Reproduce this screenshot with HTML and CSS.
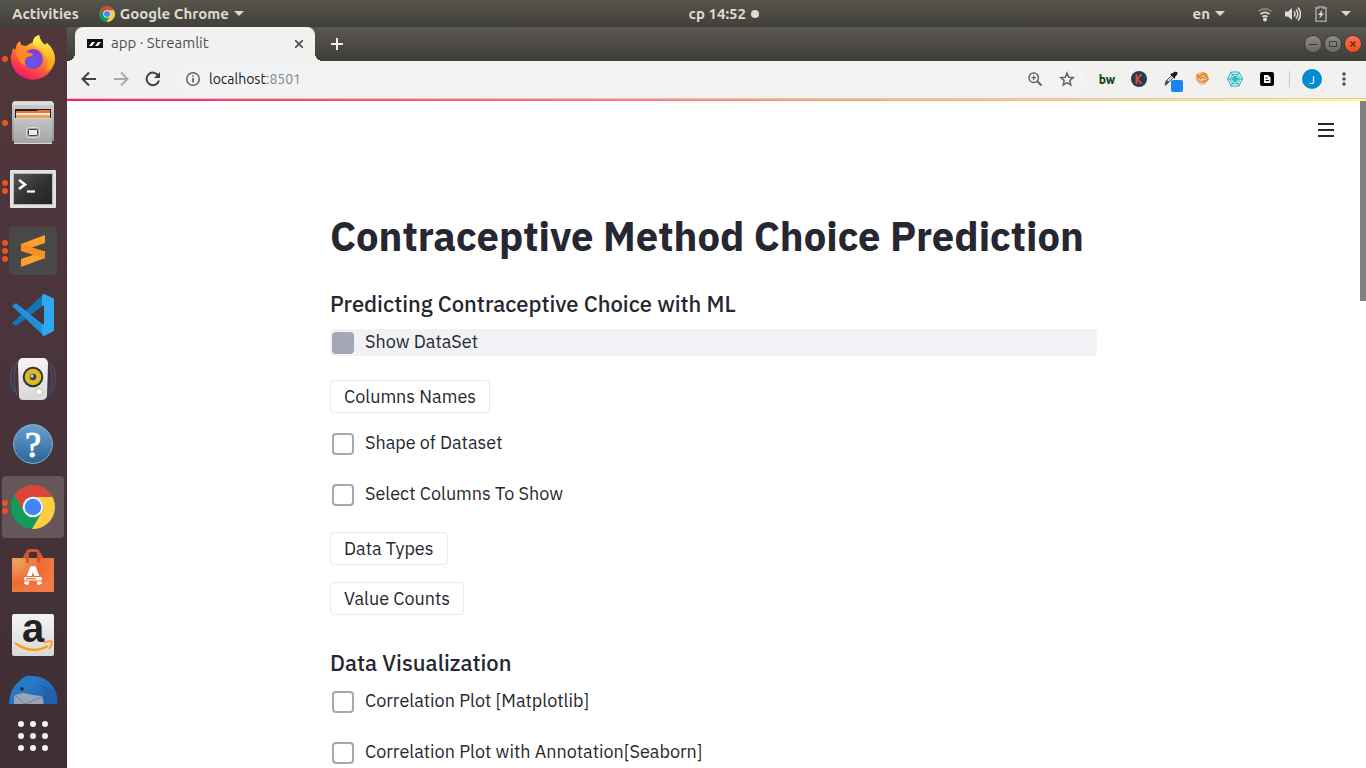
FILE: index.html
```html
<!DOCTYPE html>
<html lang="en">
<head>
<meta charset="utf-8">
<meta name="viewport" content="width=device-width, initial-scale=1">
<title>app · Streamlit</title>
<link rel="stylesheet" href="styles.css">
</head>
<body>
<svg class="defs" width="0" height="0" aria-hidden="true">
  <defs>
    <linearGradient id="ff" x1="0.8" y1="0" x2="0.3" y2="1"><stop offset="0" stop-color="#fff44f"/><stop offset=".35" stop-color="#ffa62b"/><stop offset=".7" stop-color="#ff4f3f"/><stop offset="1" stop-color="#f5156c"/></linearGradient>
    <linearGradient id="fy" x1="0.5" y1="0" x2="0.6" y2="1"><stop offset="0" stop-color="#fff44f"/><stop offset="1" stop-color="#ff980e"/></linearGradient>
    <radialGradient id="fp" cx=".45" cy=".7" r=".7"><stop offset="0" stop-color="#5b5bf0"/><stop offset="1" stop-color="#9038c8"/></radialGradient>
    <linearGradient id="metal" x1="0" y1="0" x2="0" y2="1"><stop offset="0" stop-color="#d2d2d2"/><stop offset="1" stop-color="#8e8e8e"/></linearGradient>
    <linearGradient id="front" x1="0" y1="0" x2="0" y2="1"><stop offset="0" stop-color="#c4c4c4"/><stop offset="1" stop-color="#a4a4a4"/></linearGradient>
    <linearGradient id="term" x1="0" y1="0" x2="1" y2="1"><stop offset="0" stop-color="#555"/><stop offset=".5" stop-color="#333"/><stop offset="1" stop-color="#222"/></linearGradient>
    <linearGradient id="help" x1="0" y1="0" x2="0" y2="1"><stop offset="0" stop-color="#6aa0d0"/><stop offset="1" stop-color="#2a6498"/></linearGradient>
    <radialGradient id="bag" cx=".1" cy=".1" r="1"><stop offset="0" stop-color="#f0a465"/><stop offset=".6" stop-color="#ec6c32"/><stop offset="1" stop-color="#f47b45"/></radialGradient>
    <linearGradient id="paper" x1="0" y1="0" x2="0" y2="1"><stop offset="0" stop-color="#f4f4f4"/><stop offset="1" stop-color="#d8d8d8"/></linearGradient>
    <linearGradient id="bird" x1="0" y1="0" x2="1" y2="1"><stop offset="0" stop-color="#2a8fe0"/><stop offset="1" stop-color="#1d4f9a"/></linearGradient>
    <symbol id="chrome" viewBox="0 0 44 44">
      <circle cx="22" cy="22" r="22" fill="#109d58"/>
      <path d="M3.500 10A22 22 0 0 1 41.500 12H22A10 10 0 0 0 13 27Z" fill="#db4437"/>
      <path d="M41.500 12A22 22 0 0 1 21 44L31 27A10 10 0 0 0 22 12Z" fill="#ffcd40"/>
      <circle cx="22" cy="22" r="10.300" fill="#f4f4f4"/><circle cx="22" cy="22" r="8.200" fill="#4285f4"/>
    </symbol>
  </defs>
</svg>

<header class="topbar">
  <nav class="topbar-left">
    <button class="sys" type="button">Activities</button>
    <button class="sys app-menu" type="button"><svg width="16" height="16"><use href="#chrome"/></svg><span>Google Chrome</span><i class="caret"></i></button>
  </nav>
  <button class="sys clock" type="button"><span>ср 14:52</span><i class="notice"></i></button>
  <div class="topbar-right">
    <button class="sys lang" type="button"><span>en</span><i class="caret"></i></button>
    <button class="sys status" type="button" aria-label="System status">
      <svg width="16" height="16" viewBox="0 0 16 16" fill="none" stroke="#dcdbd7" stroke-width="1.700"><path d="M1.500 5.400Q8 .4 14.500 5.400" stroke="#8b8983"/><path d="M3.500 8.200Q8 4.600 12.500 8.200M5.400 10.900Q8 8.900 10.600 10.900"/><circle cx="8" cy="13.500" r="2" fill="#dcdbd7" stroke="none"/></svg>
      <svg width="16" height="16" viewBox="0 0 16 16"><path d="M0 5.500h3L7 2v12L3 10.500H0Z" fill="#dcdbd7"/><path d="M9 5.500q2 2.500 0 5M11 3.500q3.600 4.500 0 9M13 1.500q5 6.500 0 13" stroke="#dcdbd7" stroke-width="1.500" fill="none"/></svg>
      <svg width="16" height="16" viewBox="0 0 16 16"><path d="M5.500 2V.8h5V2H13v13.300H3V2Z" fill="none" stroke="#9d9b96" stroke-width="1.800"/><path d="M9.500 3.500 5 9h2.500L6 13l5-5.500H8.500Z" fill="#dcdbd7"/></svg>
      <i class="caret"></i>
    </button>
  </div>
</header>

<div class="desktop">
  <aside class="dock" aria-label="Dock">
    <div class="dock-list">
      <button class="tile" type="button" aria-label="Firefox"><span class="dots"><i></i></span>
        <svg width="62" height="62"><path d="M10 25 11 20 13 22 15 16 18 13 19 17 24 18 31 14Q31 9 37 7Q38 13 43 17L45 15Q53 22 53 32A22.200 22.200 0 0 1 8.800 31Q8.500 27 10 25Z" fill="url(#ff)"/><path d="M31 14Q31 9 37 7Q38 13 43 17L45 15Q53 22 53 32 51 42 43 43 49 33 42 25 38 19 31 17Z" fill="url(#fy)"/><circle cx="31" cy="31" r="10" fill="url(#fp)"/><path d="M14 23Q21 20 25 24L31 26Q30 29 25 29 21 33 24 38 15 35 14 23Z" fill="#ff8a22"/></svg></button>
      <button class="tile" type="button" aria-label="Files"><span class="dots"><i></i></span>
        <svg width="62" height="62"><path d="M12 9H50L52 12V49H10V12Z" fill="url(#metal)"/><path d="M11 10H51L52 13H10Z" fill="#dedede"/><path d="M13 17H49V27H13Z" fill="#222"/><path d="M14 19H35L36 18H48V26H14Z" fill="#e07a30"/><path d="M14 21H48V23H14Z" fill="#f5e8d8"/><path d="M14 23H48V26H14Z" fill="#e9a45c"/><path d="M12 26H50V52H12Z" fill="url(#front)"/><path d="M12 26H50V27H12ZM12 51H50V52H12Z" fill="#d8d8d8"/><rect x="24.500" y="35.500" width="13" height="10" rx="2" fill="#a5a5a5" stroke="#dcdcdc"/><rect x="26.500" y="37.500" width="9" height="6" rx="1" fill="#eee" stroke="#444"/></svg></button>
      <button class="tile" type="button" aria-label="Terminal"><span class="dots"><i></i><i></i></span>
        <svg width="62" height="62"><rect x="8" y="14" width="46" height="38" rx="1" fill="#e1e1df"/><rect x="11" y="17" width="40" height="32" fill="#b8b8b6"/><rect x="12" y="18" width="38" height="30" fill="url(#term)"/><path d="m17 24 6 4.500-6 4.500" fill="none" stroke="#fff" stroke-width="2.600"/><path d="M25 35.500h8" stroke="#fff" stroke-width="2.200"/></svg></button>
      <button class="tile" type="button" aria-label="Sublime Text"><span class="dots"><i></i><i></i><i></i></span>
        <svg width="62" height="62"><rect x="7" y="7" width="48" height="48" rx="3" fill="#484848"/><path d="M19 24 43 15V23L19 31ZM43 38 19 47V39L43 31Z" fill="#ffa02a"/><path d="M19 24V31L43 38.500V31.500Z" fill="#f8911f"/></svg></button>
      <button class="tile" type="button" aria-label="Visual Studio Code">
        <svg width="62" height="62"><path d="m10 39 4 3L42 21V10Z" fill="#1474b8"/><path d="m10 22 4-3L42 41V52Z" fill="#2190d8"/><path d="m42 10 10 4.500V47L42 52l-2-1V11Z" fill="#2ea8f2"/><path d="M42 21V41L29 31Z" fill="#47343b"/></svg></button>
      <button class="tile" type="button" aria-label="Rhythmbox">
        <svg width="62" height="62"><path d="M12 16q-7 14 0 28M15 14q-6 16 0 33M50 16q7 14 0 28M47 14q6 16 0 33" fill="none" stroke="#42506b" stroke-width="1.400"/><path d="M20 10H42Q46 11 46 16L45 48Q44 52 40 52H21Q17 52 17 48L16 16Q16 11 20 10Z" fill="url(#paper)"/><circle cx="31" cy="29" r="10.300" fill="#333"/><circle cx="31" cy="29" r="8.300" fill="#d9bd22"/><circle cx="31" cy="29" r="3.300" fill="#444"/><circle cx="30" cy="28" r="1.500" fill="#ddd"/><circle cx="37" cy="44" r="3.300" fill="#fff" stroke="#bbb"/></svg></button>
      <button class="tile" type="button" aria-label="Help">
        <svg width="62" height="62"><circle cx="31" cy="32" r="19.400" fill="url(#help)" stroke="#85aed2"/><text x="31" y="45" class="help-mark">?</text></svg></button>
      <button class="tile active" type="button" aria-label="Google Chrome"><span class="dots"><i></i><i></i></span>
        <svg width="44" height="44"><use href="#chrome"/></svg></button>
      <button class="tile" type="button" aria-label="Ubuntu Software">
        <svg width="62" height="62"><path d="M10 18H52V52H10Z" fill="url(#bag)"/><path d="M25.500 23V13Q25.500 10.500 28.500 10.500H33.500Q36.500 10.500 36.500 13V23M22 18 25 13M40 18 37 13" fill="none" stroke="#d4562a" stroke-width="2.800"/><path d="M24 44.500 30 28.500H32L38 44.500" fill="none" stroke="#fff" stroke-width="4.500"/><rect x="21.500" y="36.500" width="19" height="4.500" rx="2" fill="#fff" stroke="#ec6f3a"/><path d="M24 38.800H34" stroke="#ec6f3a" stroke-width="1.300"/></svg></button>
      <button class="tile" type="button" aria-label="Amazon">
        <svg width="62" height="62"><rect x="10" y="10" width="42" height="42" rx="2" fill="url(#paper)"/><text x="31" y="38" class="amazon-mark">a</text><path d="M13 39Q30 51 46 42" fill="none" stroke="#ff9d0a" stroke-width="2.400"/><path d="M42 39Q48 36 50 38 50 41 47 45" fill="none" stroke="#ff9d0a" stroke-width="1.800"/></svg></button>
      <button class="tile" type="button" aria-label="Thunderbird">
        <svg width="62" height="62"><path d="M7 36Q8 18 20 12 23 7 29 8 47 8 54 24 57 32 54 44H8Z" fill="url(#bird)"/><path d="M12 40V28L18 24 31 27 40 28Q43 35 40 44Z" fill="#98a3b5"/><path d="m14 28 9 8 17-7" fill="none" stroke="#717e93"/><path d="M9 28Q14 12 25 8 34 12 36 17 28 17 26 21 20 27 14 26Z" fill="#2779c2"/><path d="M36 17Q46 22 43 36L53 37Q55 20 36 17Z" fill="#2260a8"/><circle cx="20" cy="21" r="1.800" fill="#1b2740"/></svg></button>
    </div>
    <button class="apps" type="button" aria-label="Show Applications">
      <svg width="32" height="32" fill="#f2f1f0"><circle cx="4" cy="4" r="3"/><circle cx="16" cy="4" r="3"/><circle cx="28" cy="4" r="3"/><circle cx="4" cy="16" r="3"/><circle cx="16" cy="16" r="3"/><circle cx="28" cy="16" r="3"/><circle cx="4" cy="28" r="3"/><circle cx="16" cy="28" r="3"/><circle cx="28" cy="28" r="3"/></svg>
    </button>
  </aside>

  <section class="browser">
    <div class="tabstrip">
      <div class="tab">
        <svg width="16" height="16"><path d="M0 3H16V12H0Z" fill="#111"/><path d="M2 10 5 6H8L5 10ZM8 10 11 6H14L11 10Z" fill="#fff"/></svg>
        <span class="tab-title">app · Streamlit</span>
        <button class="plain" type="button" aria-label="Close tab"><svg width="8" height="8" stroke="#4a4c50" stroke-width="1.600"><path d="m0 0 8 8M8 0 0 8"/></svg></button>
      </div>
      <button class="plain new-tab" type="button" aria-label="New tab"><svg width="12" height="12" stroke="#eee" stroke-width="2"><path d="M6 0v12M0 6h12"/></svg></button>
      <div class="window-buttons">
        <button type="button" aria-label="Minimize"><svg width="8" height="8" stroke="#3c3b37"><path d="M0 4.500h8"/></svg></button>
        <button type="button" aria-label="Maximize"><svg width="8" height="8" stroke="#3c3b37" fill="none"><path d="M.5 1.500h7v5h-7z"/></svg></button>
        <button class="close" type="button" aria-label="Close"><svg width="8" height="8" stroke="#5a2413" stroke-width="1.200"><path d="m1.500 1.500 5 5m0-5-5 5"/></svg></button>
      </div>
    </div>

    <div class="toolbar">
      <div class="nav">
        <button class="plain" type="button" aria-label="Back"><svg width="16" height="16" fill="none" stroke="#3f4144" stroke-width="2"><path d="M15 8H2M8 1.500 1.500 8 8 14.500"/></svg></button>
        <button class="plain" type="button" aria-label="Forward"><svg width="16" height="16" fill="none" stroke="#a9a9a9" stroke-width="2"><path d="M1 8h13M8 1.500 14.500 8 8 14.500"/></svg></button>
        <button class="plain" type="button" aria-label="Reload"><svg width="16" height="16" fill="none" stroke="#3f4144" stroke-width="2"><path d="M13.200 4.500A6.300 6.300 0 1 0 14 9.500"/><path d="M15 1v6H9Z" fill="#3f4144" stroke="none"/></svg></button>
      </div>
      <div class="address">
        <svg width="16" height="16" fill="none" stroke="#5f6368" stroke-width="1.500"><circle cx="8" cy="8" r="6.300"/><path d="M8 7v4.500M8 4.200v1.600" stroke-width="1.700"/></svg>
        <a class="url" href="#">localhost<span>:8501</span></a>
        <button class="plain" type="button" aria-label="Zoom"><svg width="16" height="16" fill="none" stroke="#5f6368" stroke-width="1.500"><circle cx="6.700" cy="6.700" r="4.700"/><path d="m10 10 4.500 4.500" stroke-width="2"/><path d="M4.500 6.700h4.400M6.700 4.500v4.400" stroke-width="1.200"/></svg></button>
        <button class="plain" type="button" aria-label="Bookmark"><svg width="16" height="16" fill="none" stroke="#5f6368" stroke-width="1.500"><path d="m8 2 1.700 4.200 4.500.4-3.400 3 1 4.400L8 11.700 4.200 14l1-4.400-3.400-3 4.500-.4Z"/></svg></button>
      </div>
      <div class="extensions">
        <button class="plain bw" type="button">bw</button>
        <button class="plain" type="button" aria-label="K"><svg width="16" height="16"><circle cx="8" cy="8" r="8" fill="#263c4d"/><path d="M5.500 3v10M10.500 3 6.500 8l4 5" fill="none" stroke="#e5483f" stroke-width="1.800"/></svg></button>
        <button class="plain picker" type="button" aria-label="Color picker"><svg width="16" height="16"><path d="m2 14 1-4 6-6 2 2-6 6Z" fill="#b8d8cc" stroke="#334" stroke-width=".8"/><path d="M2 15 4 9 6 11Z" fill="#1c5a35"/><path d="m7 3 2-.5L12 .8Q15 0 14.500 3L12 6 12 8Z" fill="#181818"/></svg><i class="picker-color"></i></button>
        <button class="plain" type="button" aria-label="Extension"><svg width="16" height="16"><ellipse cx="7" cy="7" rx="6.500" ry="6" fill="#e9bd98"/><path d="M1 3 5 4 8 1 12 3 14 9 9 12 3 10Z" fill="#ef8a2f"/><path d="m3 9 5-5 4 4-6 2Z" fill="#fbd3a8"/><path d="m5 8 3-2 2 2" stroke="#c25b1c" fill="none"/><path d="m2 10 3 3 6 0" stroke="#bbb" fill="none"/></svg></button>
        <button class="plain" type="button" aria-label="Web extension"><svg width="16" height="16" fill="none" stroke="#16b4c0"><path d="M4.200 1h7.600L15.500 8l-3.700 7H4.200L.5 8Z"/><path d="M5.300 3.500h5.400L13 8l-2.300 4.500H5.300L3 8ZM6.500 5.500h3L11 8l-1.500 2.500h-3L5 8ZM0 8h16M4 1l8 14M12 1 4 15" stroke-width=".9"/><circle cx="8" cy="8" r="1.500"/></svg></button>
        <button class="plain" type="button" aria-label="Document extension"><svg width="16" height="16"><rect x="1" y="1" width="14" height="14" rx="2" fill="#000"/><path d="M5 4h4l2.500 2.500V12H5Z" fill="#fff"/><path d="M6.500 7h2M6.500 9.500h3.500" stroke="#000"/></svg></button>
        <span class="divider"></span>
        <button class="plain avatar" type="button">J</button>
        <button class="plain" type="button" aria-label="Chrome menu"><svg width="16" height="16" fill="#4a4c50"><circle cx="8" cy="3" r="1.700"/><circle cx="8" cy="8" r="1.700"/><circle cx="8" cy="13" r="1.700"/></svg></button>
      </div>
    </div>

    <div class="decoration"></div>
    <div class="viewport">
      <div class="page">
        <header class="page-header"><button class="plain" type="button" aria-label="Menu"><svg width="16" height="14" stroke="#262730" stroke-width="2"><path d="M0 1h16M0 7h16M0 13h16"/></svg></button></header>
        <main class="content">
          <h1>Contraceptive Method Choice Prediction</h1>
          <h2>Predicting Contraceptive Choice with ML</h2>
          <label class="check focused"><input type="checkbox"><span>Show DataSet</span></label>
          <button class="action" type="button">Columns Names</button>
          <label class="check"><input type="checkbox"><span>Shape of Dataset</span></label>
          <label class="check"><input type="checkbox"><span>Select Columns To Show</span></label>
          <button class="action" type="button">Data Types</button>
          <button class="action" type="button">Value Counts</button>
          <h2 class="section">Data Visualization</h2>
          <label class="check"><input type="checkbox"><span>Correlation Plot [Matplotlib]</span></label>
          <label class="check"><input type="checkbox"><span>Correlation Plot with Annotation[Seaborn]</span></label>
        </main>
      </div>
      <div class="scrollbar"><div class="thumb"></div></div>
    </div>
  </section>
</div>
</body>
</html>
```
FILE: styles.css
```css
* { box-sizing: border-box; }

body {
  display: flex;
  flex-direction: column;
  height: 100vh;
  margin: 0;
  overflow: hidden;
  font-family: Ubuntu, "Noto Sans", "Open Sans", sans-serif;
  background: #fff;
}

button {
  padding: 0;
  border: 0;
  background: none;
  color: inherit;
  font: inherit;
}

svg { display: block; flex: none; }
.defs { position: absolute; }
.plain { display: flex; align-items: center; justify-content: center; }

/* System bar */
.topbar {
  display: grid;
  grid-template-columns: 8fr auto 7fr;
  height: 27px;
  flex: none;
  padding: 0 15px 0 12px;
  background: linear-gradient(#57554c, #403f3a);
  color: #dfdbd2;
  font-size: 15px;
  font-weight: 700;
  line-height: 27px;
}
.topbar-left { display: flex; gap: 20px; }
.topbar-right { display: flex; justify-content: flex-end; gap: 32px; }
.sys { display: flex; align-items: center; gap: 5px; white-space: nowrap; }
.caret {
  border: 5px solid transparent;
  border-top-color: #dfdbd2;
  border-bottom: 0;
}
.notice { width: 8px; height: 8px; border-radius: 50%; background: #dfdbd2; }
.status { gap: 12px; }

/* Dock */
.desktop { display: flex; flex: 1; min-height: 0; }
.dock {
  display: flex;
  flex-direction: column;
  flex: none;
  width: 67px;
  padding: 1px 1px 0 0;
  background: linear-gradient(#50373b, #49343b 50%, #3d2f33);
}
.dock-list {
  display: flex;
  flex-direction: column;
  flex: 1;
  gap: 2px;
  min-height: 0;
  padding-left: 2px;
  overflow: hidden;
}
.tile {
  position: relative;
  display: flex;
  align-items: center;
  justify-content: center;
  flex: none;
  width: 62px;
  height: 62px;
  border-radius: 4px;
}
.tile.active { background: #675659; }
.dots {
  position: absolute;
  top: 0;
  bottom: 0;
  left: 0;
  display: flex;
  flex-direction: column;
  justify-content: center;
  gap: 2px;
}
.dots i { width: 6px; height: 6px; border-radius: 50%; background: #e95420; }
.help-mark { fill: #fff; font: 36px "Liberation Serif", serif; stroke: #fff; text-anchor: middle; }
.amazon-mark { fill: #222; font: bold 40px "Liberation Sans", sans-serif; text-anchor: middle; }
.apps { display: flex; align-items: center; justify-content: center; flex: none; height: 64px; }

/* Browser frame */
.browser { display: flex; flex-direction: column; flex: 1; min-width: 0; }
.tabstrip {
  display: flex;
  align-items: center;
  flex: none;
  height: 34px;
  padding: 0 5px 0 8px;
  background: linear-gradient(#5a584f, #3e3d39);
}
.tab {
  position: relative;
  display: flex;
  align-items: center;
  gap: 8px;
  width: 240px;
  height: 34px;
  padding: 0 12px;
  border-radius: 8px 8px 0 0;
  background: #f2f1f0;
  color: #4d4f53;
  font-size: 15px;
}
.tab::before,
.tab::after {
  position: absolute;
  bottom: 0;
  width: 8px;
  height: 8px;
  content: "";
}
.tab::before { right: 100%; background: radial-gradient(circle at 0 0, transparent 8px, #f2f1f0 8px); }
.tab::after { left: 100%; background: radial-gradient(circle at 100% 0, transparent 8px, #f2f1f0 8px); }
.tab-title { flex: 1; line-height: 32px; height: 34px; }
.new-tab { margin-left: 16px; }
.window-buttons { display: flex; gap: 4px; margin-left: auto; }
.window-buttons button {
  display: flex;
  align-items: center;
  justify-content: center;
  width: 16px;
  height: 16px;
  border-radius: 50%;
  background: linear-gradient(#8b8a84, #6b6963);
  box-shadow: 0 0 0 1px #3a3935;
}
.window-buttons .close { background: linear-gradient(#f9744f, #ee4a1c); }

.toolbar {
  display: flex;
  align-items: center;
  flex: none;
  height: 38px;
  padding: 0 14px 1px;
  border-bottom: 1px solid #cfcecd;
  background: #f2f1f0;
}
.nav { display: flex; gap: 16px; }
.address {
  display: flex;
  align-items: center;
  flex: 1;
  gap: 16px;
  height: 28px;
  margin: 0 14px 0 16px;
  padding: 0 10px 0 8px;
  border-radius: 14px;
  background: #f1f3f4;
}
.url {
  flex: 1;
  margin-left: -8px;
  color: #202124;
  font-size: 14px;
  text-decoration: none;
}
.url span { color: #80868b; }
.extensions { display: flex; align-items: center; gap: 16px; }
.bw { width: 16px; color: #0b4a10; font-size: 12px; font-weight: 900; }
.picker { position: relative; }
.picker-color {
  position: absolute;
  top: 9px;
  left: 8px;
  width: 12px;
  height: 12px;
  border-radius: 2px;
  background: #1a84f7;
}
.divider { width: 1px; height: 16px; margin: 0 -4px 0 -2px; background: #c9c8c7; }
.avatar {
  width: 20px;
  height: 20px;
  border-radius: 50%;
  background: #028ad3;
  color: #fff;
  font-size: 12px;
}
.extensions .avatar + button { margin-left: -2px; }

/* Streamlit page */
.decoration { flex: none; height: 2px; background: linear-gradient(90deg, #ff1f68, #fffd80); }
.viewport { display: flex; flex: 1; min-height: 0; }
.page {
  flex: 1;
  min-width: 0;
  overflow: hidden;
  color: #262730;
  font-family: "IBM Plex Sans", "Noto Sans", sans-serif;
}
.page-header { display: flex; justify-content: flex-end; height: 111px; padding: 22px 26px 0 0; }
.page-header button { height: 14px; }
.content {
  display: flex;
  flex-direction: column;
  align-items: flex-start;
  max-width: 767px;
  margin: 0 auto;
  font-size: 18px;
}
h1 { margin: 0 0 30px; font-size: 40px; font-weight: 700; line-height: 48px; }
h2 { margin: 0 0 11px; font-size: 22px; font-weight: 500; line-height: 28px; }
.section { margin-top: 17px; }
.check {
  display: flex;
  align-items: center;
  align-self: stretch;
  gap: 11px;
  height: 27px;
  margin-bottom: 24px;
  padding-left: 2px;
  border-radius: 4px;
  line-height: 25px;
}
.check span { height: 27px; }
.check input {
  width: 22px;
  height: 22px;
  margin: 0;
  border: 2px solid #a3a8b4;
  border-radius: 4px;
  background: #fff;
  appearance: none;
}
.focused { background: #f0f2f6; }
.check.focused input { background: #a3a8b4; }
.action {
  height: 33px;
  margin-bottom: 17px;
  padding: 0 13px;
  border: 1px solid #e6eaf1;
  border-radius: 4px;
  background: #fff;
}
.scrollbar { flex: none; width: 6px; background: #fff; }
.thumb { height: 30%; background: #808080; }
```
